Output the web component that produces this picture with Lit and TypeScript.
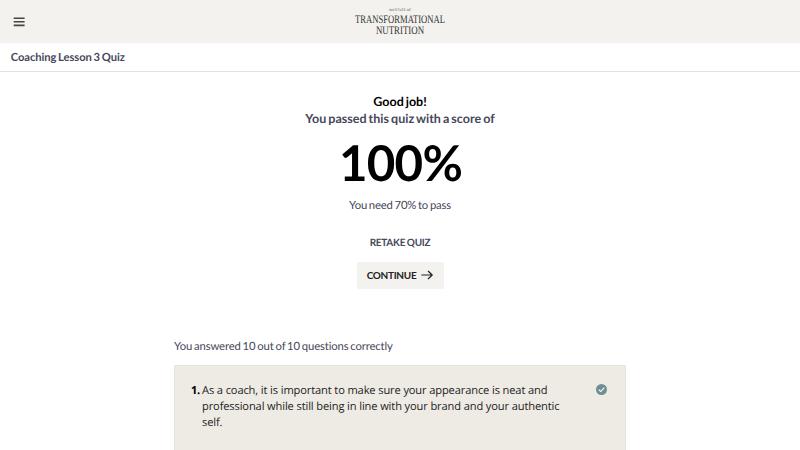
import { LitElement, html, css } from "lit";
import { customElement } from "lit/decorators.js";

@customElement("app-root")
export class AppRoot extends LitElement {
  static styles = css`
    :host { display: block; height: 450px; overflow: hidden; background: #fff; color: #46475a; font-family: Lato, sans-serif; font-size: 11.3px; text-rendering: geometricPrecision; font-variant-ligatures: none; }
    * { box-sizing: border-box; }
    header { height: 43px; background: #f3f2ee; display: grid; grid-template-columns: 1fr 100px 1fr; align-items: start; }
    .menu { margin: 17px 0 0 13px; width: 12px; height: 10px; display: block; }
    .logo { display: block; width: 100px; height: 43px; }
    .title { height: 29px; border-bottom: 1px solid #e2e2e2; padding-left: 10.7px; line-height: 29px; font-weight: 700; font-size: 11.2px; letter-spacing: -.06px; word-spacing: -.9px; }
    .result { display: flex; flex-direction: column; align-items: center; padding-top: 22px; }
    .good { color: #000; font-weight: 700; font-size: 12.5px; line-height: 16px; word-spacing: -1px; }
    .passed { font-weight: 700; font-size: 12.5px; line-height: 17px; letter-spacing: .01px; word-spacing: -1px; }
    .score { color: #000; font-weight: 700; font-size: 49.3px; line-height: 60px; margin-top: 5px; letter-spacing: -.8px; padding-left: 1px; }
    .need { line-height: 16px; margin-top: 6px; letter-spacing: -.17px; word-spacing: -.9px; }
    .retake { font-weight: 700; font-size: 10px; line-height: 16px; margin-top: 21px; letter-spacing: -.25px; word-spacing: -.5px; }
    .continue { font: 700 10px/16px Lato, sans-serif; letter-spacing: -.3px; color: #222; background: #f3f2ee; border: 0; border-radius: 2px; width: 87px; height: 27px; margin-top: 11px; padding: 0 0 1px; display: flex; align-items: center; justify-content: center; gap: 5px; }
    .arrow { width: 12px; height: 10px; }
    .answers { width: 452px; margin: 50px auto 0; }
    .summary { display: block; line-height: 16px; letter-spacing: -.13px; word-spacing: -.9px; }
    .card { height: 110px; margin-top: 10px; background: #eeebe4; border: 1px solid #e6e3dc; border-radius: 1px; padding: 17px 18px 0 16px; display: flex; color: #222; font-family: "Open Sans", sans-serif; font-size: 11.1px; line-height: 16.2px; letter-spacing: -.12px; }
    .num { font-weight: 700; color: #000; width: 11px; letter-spacing: -.4px; }
    .question { width: 370px; }
    .check { width: 11px; height: 11px; margin: 1px 0 0 auto; }
  `;

  render() {
    return html`
      <header>
        <svg class="menu" viewBox="0 0 12 10"><path d="M.7 1.2h10.9M.7 4.8h10.9M.7 8.4h10.9" stroke="#454545" stroke-width="1.6"/></svg>
        <svg class="logo" viewBox="0 0 100 43" fill="#333" text-anchor="middle" font-family="Liberation Serif, serif">
          <text x="50" y="11.4" font-size="3" font-family="Lato, sans-serif" textLength="22">INSTITUTE OF</text>
          <text transform="translate(50 23.1) scale(.75 1)" font-size="11.5">TRANSFORMATIONAL</text>
          <text transform="translate(50 34.2) scale(.77 1)" font-size="11.5">NUTRITION</text>
        </svg>
      </header>
      <div class="title"><span>Coaching Lesson 3 Quiz</span></div>
      <section class="result">
        <span class="good">Good job!</span>
        <span class="passed">You passed this quiz with a score of</span>
        <span class="score">100%</span>
        <span class="need">You need 70% to pass</span>
        <span class="retake">RETAKE QUIZ</span>
        <button class="continue">CONTINUE
          <svg class="arrow" viewBox="0 0 12 10" fill="none" stroke="#222" stroke-width="1.2" stroke-linecap="round" stroke-linejoin="round"><path d="M.8 5h10.4M7.3 1.3 11.2 5 7.3 8.7"/></svg>
        </button>
      </section>
      <section class="answers">
        <span class="summary">You answered 10 out of 10 questions correctly</span>
        <div class="card">
          <span class="num">1.</span>
          <span class="question">As a coach, it is important to make sure your appearance is neat and<br>professional while still being in line with your brand and your authentic<br>self.</span>
          <svg class="check" viewBox="0 0 11 11"><circle cx="5.5" cy="5.5" r="5.5" fill="#6f8e96"/><path d="m2.8 5.7 1.9 1.8 3.6-3.9" fill="none" stroke="#fff" stroke-width="1.1"/></svg>
        </div>
      </section>
    `;
  }
}
